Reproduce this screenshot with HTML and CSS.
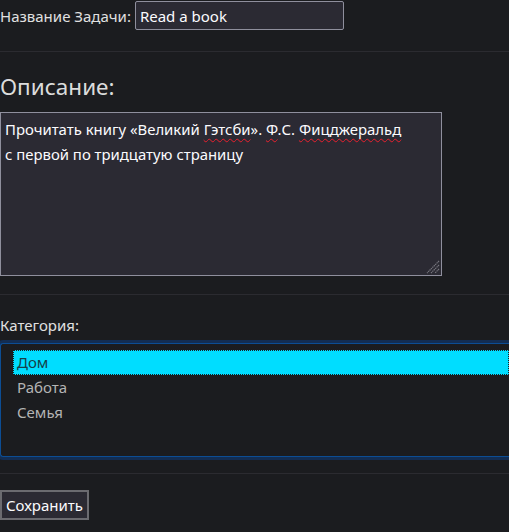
FILE: index.html
```html
<!DOCTYPE html>
<html lang="ru">
<head>
<meta charset="utf-8">
<title>Задача</title>
<link rel="stylesheet" href="styles.css">
</head>
<body>
<form class="task-form">
  <div class="name-row">
    <label class="name-label" for="title">Название Задачи:</label>
    <input class="name-input" id="title" type="text" value="Read a book">
  </div>
  <hr class="sep sep-first">
  <h2 class="section-title">Описание:</h2>
  <div class="textarea" role="textbox" aria-multiline="true">
    <div class="ta-line">Прочитать книгу «Великий <span class="spell">Гэтсби</span>». <span class="spell">Ф</span>.С. <span class="spell">Фицджеральд</span></div>
    <div class="ta-line">с первой по тридцатую страницу</div>
    <svg class="grip" width="14" height="14" viewBox="0 0 14 14" aria-hidden="true">
      <path d="M13 1 L1 13 M13 5 L5 13 M13 9 L9 13" stroke="#77767f" stroke-width="1.2" stroke-dasharray="1.4 0.6" fill="none"/>
    </svg>
  </div>
  <hr class="sep sep-second">
  <div class="cat-label">Категория:</div>
  <div class="listbox" role="listbox">
    <div class="option selected" role="option" aria-selected="true">Дом</div>
    <div class="option" role="option">Работа</div>
    <div class="option" role="option">Семья</div>
  </div>
  <hr class="sep sep-third">
  <button class="save-btn" type="button">Сохранить</button>
</form>
</body>
</html>
```
FILE: styles.css
```css
html {
  background: #1b1c1f;
}
body {
  margin: 0;
  background: #1b1c1f;
  color: #e3e3e3;
  font-family: "Noto Sans", "Open Sans", sans-serif;
}
.task-form {
  display: flex;
  flex-direction: column;
  align-items: flex-start;
}
.name-row {
  display: flex;
  align-items: center;
  gap: 4px;
  margin-top: 1px;
}
.name-label {
  font-size: 15px;
  color: #e0e0e0;
}
.name-input {
  box-sizing: border-box;
  width: 209px;
  height: 29px;
  margin: 0;
  padding: 0 4px;
  background: #2b2a33;
  border: 1px solid #8f8f9d;
  border-radius: 2px;
  color: #fbfbfe;
  font-family: inherit;
  font-size: 15px;
  outline: none;
}
.sep {
  align-self: stretch;
  height: 1px;
  margin: 0;
  border: 0;
  background: #2b2b30;
}
.sep-first { margin-top: 21px; }
.section-title {
  margin: 21px 0 0;
  font-size: 22.5px;
  font-weight: 400;
  line-height: 28px;
  color: #dcdcdc;
}
.textarea {
  position: relative;
  box-sizing: border-box;
  width: 442px;
  height: 164px;
  margin-top: 11px;
  padding: 4px 4px;
  background: #2b2a33;
  border: 1px solid #8f8f9d;
  color: #fbfbfe;
  font-size: 14.9px;
  line-height: 25px;
}
.spell {
  text-decoration: underline wavy #e8202e;
  text-decoration-thickness: 1.2px;
  text-underline-offset: 3px;
  text-decoration-skip-ink: none;
}
.grip {
  position: absolute;
  right: 1px;
  bottom: 1px;
}
.sep-second { margin-top: 18px; }
.cat-label {
  margin-top: 20px;
  font-size: 15px;
  line-height: 20px;
  color: #e0e0e0;
}
.listbox {
  box-sizing: border-box;
  align-self: stretch;
  height: 114px;
  margin-top: 8px;
  padding: 6px 0 6px 12px;
  border: 1px solid #0c4d94;
  border-right: 0;
  border-radius: 3px 0 0 3px;
  box-shadow: 0 0 0 3px #132d52;
  background: #1b1c1f;
  font-size: 15px;
}
.option {
  height: 25px;
  line-height: 25px;
  padding-left: 4px;
  color: #b4b4b4;
}
.option.selected {
  box-sizing: border-box;
  background: #00ddff;
  color: #173f48;
  outline: 1px dotted #1b1c1f;
  outline-offset: -1px;
}
.sep-third { margin-top: 16px; }
.save-btn {
  box-sizing: border-box;
  width: 89px;
  height: 30px;
  margin-top: 16px;
  padding: 0;
  background: #2b2a33;
  border: 2px solid #6b6b70;
  border-radius: 0;
  color: #fbfbfe;
  font-family: inherit;
  font-size: 15px;
}
```
